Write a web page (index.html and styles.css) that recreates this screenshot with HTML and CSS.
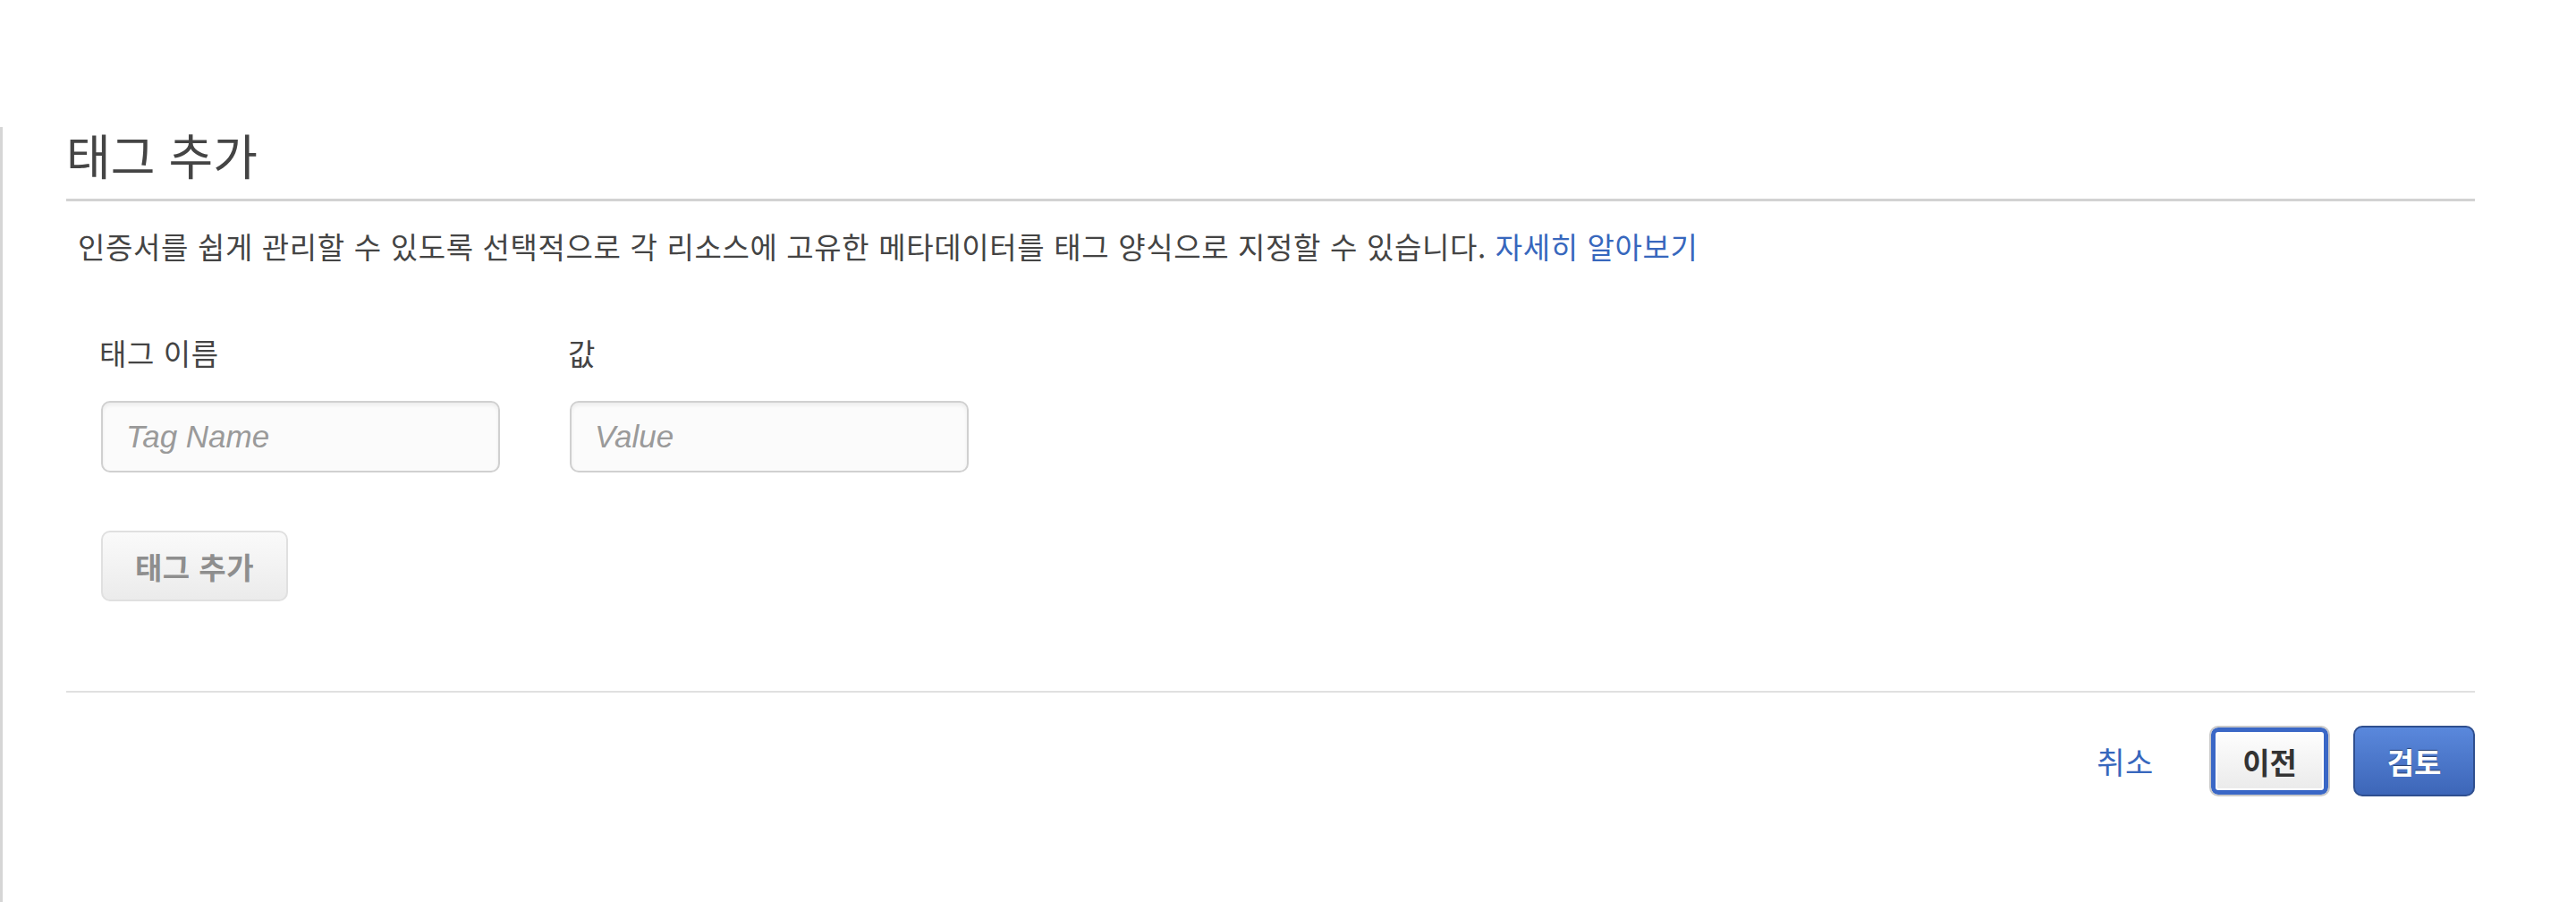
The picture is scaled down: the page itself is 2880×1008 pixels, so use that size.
FILE: index.html
```html
<!DOCTYPE html>
<html lang="ko">
<head>
<meta charset="utf-8">
<title>태그 추가</title>
<link rel="stylesheet" href="styles.css">
</head>
<body>
<div class="panel">
  <h1 class="title">태그 추가</h1>
  <p class="desc">인증서를 쉽게 관리할 수 있도록 선택적으로 각 리소스에 고유한 메타데이터를 태그 양식으로 지정할 수 있습니다. <a class="link" href="#">자세히 알아보기</a></p>
  <div class="form">
    <div class="fields">
      <div class="field">
        <label class="label">태그 이름</label>
        <input class="input" type="text" placeholder="Tag Name">
      </div>
      <div class="field">
        <label class="label">값</label>
        <input class="input" type="text" placeholder="Value">
      </div>
    </div>
    <button class="btn-add" type="button">태그 추가</button>
  </div>
  <div class="footer">
    <a class="cancel" href="#">취소</a>
    <button class="btn-prev" type="button">이전</button>
    <button class="btn-review" type="button">검토</button>
  </div>
</div>
</body>
</html>
```

FILE: styles.css
```css
html, body {
  margin: 0;
  padding: 0;
  background: #ffffff;
}

body {
  font-family: "Noto Sans CJK KR", "Noto Sans", sans-serif;
  color: #444444;
}

.panel {
  margin-top: 142px;
  min-height: 866px;
  box-sizing: border-box;
  border-left: 3px solid #d6d6d6;
  padding-left: 71px;
  padding-right: 113px;
}

.title {
  margin: 2px 0 0 0;
  font-size: 54px;
  line-height: 62px;
  font-weight: 400;
  color: #444444;
  padding-bottom: 18px;
  border-bottom: 3px solid #d2d2d2;
}

.desc {
  margin: 28px 0 0 0;
  padding-left: 13px;
  font-size: 33px;
  letter-spacing: 0.65px;
  line-height: 44px;
  color: #444444;
}

.link {
  color: #3767bd;
  text-decoration: none;
}

.form {
  padding-left: 39px;
  margin-top: 75px;
}

.fields {
  display: flex;
  gap: 78px;
}

.field {
  display: flex;
  flex-direction: column;
  width: 446px;
}

.label {
  font-size: 33px;
  letter-spacing: 0.6px;
  line-height: 44px;
  color: #444444;
  margin-left: -2px;
}

.input {
  margin-top: 32px;
  box-sizing: border-box;
  width: 446px;
  height: 80px;
  border: 2px solid #d0d0d0;
  border-radius: 10px;
  background: #fbfbfb;
  box-shadow: inset 0 3px 4px rgba(0, 0, 0, 0.06);
  padding: 0 26px;
  font-family: "Liberation Sans", Arial, sans-serif;
  font-size: 35px;
  color: #333333;
  outline: none;
}

.input::placeholder {
  color: #9a9a9a;
  font-style: italic;
}

.btn-add {
  margin-top: 65px;
  box-sizing: border-box;
  width: 209px;
  height: 79px;
  border: 2px solid #e0e0e0;
  border-radius: 10px;
  background: linear-gradient(#fafafa, #ebebeb);
  font-family: "Noto Sans CJK KR", sans-serif;
  font-size: 33px;
  letter-spacing: 0.5px;
  font-weight: 700;
  color: #8e8e8e;
  padding: 0;
}

.footer {
  margin-top: 100px;
  border-top: 2px solid #e0e0e0;
  padding-top: 37px;
  display: flex;
  justify-content: flex-end;
  align-items: center;
}

.cancel {
  font-size: 34px;
  letter-spacing: 0.6px;
  line-height: 44px;
  color: #3767bd;
  text-decoration: none;
  margin-right: 62px;
}

.btn-prev {
  box-sizing: border-box;
  width: 135px;
  height: 79px;
  border: 2px solid #c9c9c9;
  border-radius: 10px;
  background: linear-gradient(#ffffff, #e9e9e9);
  box-shadow: inset 0 0 0 5px #3a67c6, inset 0 0 0 7px #ffffff;
  font-family: "Noto Sans CJK KR", sans-serif;
  font-size: 33px;
  font-weight: 700;
  color: #333333;
  padding: 0;
  margin-right: 26px;
}

.btn-review {
  box-sizing: border-box;
  width: 136px;
  height: 79px;
  border: 2px solid #2f4f8f;
  border-radius: 10px;
  background: linear-gradient(#5a88dc, #3d66b8);
  font-family: "Noto Sans CJK KR", sans-serif;
  font-size: 33px;
  font-weight: 700;
  color: #ffffff;
  text-shadow: 0 -1px 1px rgba(0, 0, 0, 0.45);
  padding: 0;
}
```
